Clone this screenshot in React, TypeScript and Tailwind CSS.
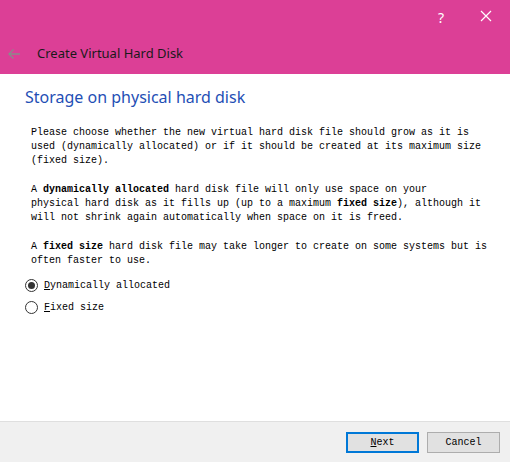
import React from 'react'

const mono = { fontFamily: '"Liberation Mono", "DejaVu Sans Mono", monospace' }

function Radio({ checked, label, accel }: { checked: boolean; label: string; accel: string }) {
  return (
    <label className="flex h-[22px] items-center gap-[6px]">
      <span className="flex h-[13px] w-[13px] items-center justify-center rounded-full border border-[#333] bg-white">
        {checked && <span className="h-[7px] w-[7px] rounded-full bg-[#333]" />}
      </span>
      <span className="text-[10px] text-black" style={mono}>
        <span className="underline">{accel}</span>
        {label}
      </span>
    </label>
  )
}

export default function App() {
  return (
    <div className="flex h-[462px] w-[510px] flex-col bg-white">
      {/* Header */}
      <div className="relative h-[74px] shrink-0 bg-[#dc3f96]">
        <div className="absolute right-[66px] top-[7px] text-[14px] text-white" style={{ fontFamily: '"Noto Sans", sans-serif' }}>
          ?
        </div>
        <svg className="absolute right-[18px] top-[10px]" width="12" height="12" viewBox="0 0 12 12">
          <path d="M1 1 L11 11 M11 1 L1 11" stroke="#fff" strokeWidth="1.2" />
        </svg>
        <div className="absolute left-[7px] top-[48px] flex items-center">
          <svg width="14" height="12" viewBox="0 0 14 12">
            <path d="M13 6 H2 M6.5 1.5 L2 6 L6.5 10.5" stroke="#8a8a8a" strokeWidth="1.4" fill="none" />
          </svg>
        </div>
        <div
          className="absolute left-[37px] top-[44px] text-[13px] text-[#1a1a1a]"
          style={{ fontFamily: '"Noto Sans", "Open Sans", sans-serif' }}
        >
          Create Virtual Hard Disk
        </div>
      </div>

      {/* Body */}
      <div className="flex flex-1 flex-col px-[25px] pt-[12px]">
        <h1
          className="text-[16px] leading-[22px] text-[#1f4fb5]"
          style={{ fontFamily: '"Noto Sans", "Open Sans", sans-serif' }}
        >
          Storage on physical hard disk
        </h1>
        <div
          className="-mr-[20px] mt-[18px] flex flex-col gap-[15px] whitespace-nowrap pl-[6px] text-[10px] leading-[14px] text-black"
          style={mono}
        >
          <p>
            Please choose whether the new virtual hard disk file should grow as it is
            <br />
            used (dynamically allocated) or if it should be created at its maximum size
            <br />
            (fixed size).
          </p>
          <p>
            A <b>dynamically allocated</b> hard disk file will only use space on your
            <br />
            physical hard disk as it fills up (up to a maximum <b>fixed size</b>), although it
            <br />
            will not shrink again automatically when space on it is freed.
          </p>
          <p>
            A <b>fixed size</b> hard disk file may take longer to create on some systems but is
            <br />
            often faster to use.
          </p>
        </div>
        <div className="mt-[6px] flex flex-col">
          <Radio checked accel="D" label="ynamically allocated" />
          <Radio checked={false} accel="F" label="ixed size" />
        </div>
      </div>

      {/* Footer */}
      <div className="flex h-[41px] shrink-0 items-center justify-end gap-[8px] border-t border-[#dfdfdf] bg-[#f0f0f0] pr-[10px]">
        <button
          className="flex h-[21px] w-[73px] items-center justify-center border-2 border-[#0078d7] bg-[#e1e1e1] text-[10px] text-black"
          style={mono}
        >
          <span className="underline">N</span>ext
        </button>
        <button
          className="flex h-[21px] w-[73px] items-center justify-center border border-[#adadad] bg-[#e1e1e1] text-[10px] text-black"
          style={mono}
        >
          Cancel
        </button>
      </div>
    </div>
  )
}
